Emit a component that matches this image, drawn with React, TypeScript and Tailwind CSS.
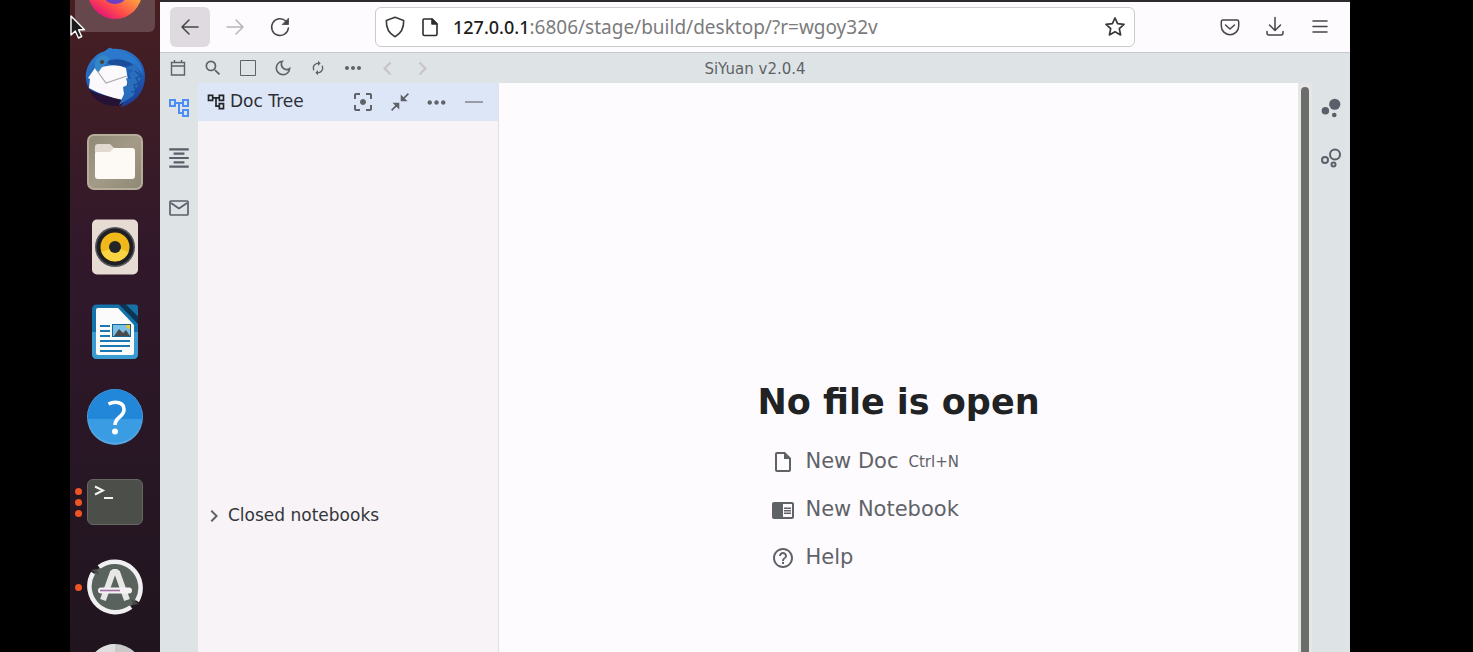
import type {ReactNode} from "react";
import {
    MdAutorenew,
    MdBubbleChart,
    MdChevronLeft,
    MdChevronRight,
    MdChromeReaderMode,
    MdFilterCenterFocus,
    MdFormatAlignCenter,
    MdHelpOutline,
    MdMoreHoriz,
    MdOutlineAccountTree,
    MdOutlineDarkMode,
    MdOutlineInsertDriveFile,
    MdSearch,
} from "react-icons/md";

type DockItem = {
    label: string;
    icon: ReactNode;
    windows?: number;
    active?: boolean;
};

const dockItems: DockItem[] = [
    {label: "Firefox", icon: <FirefoxIcon/>, active: true},
    {label: "Thunderbird", icon: <ThunderbirdIcon/>},
    {label: "Files", icon: <FilesIcon/>},
    {label: "Rhythmbox", icon: <RhythmboxIcon/>},
    {label: "LibreOffice Writer", icon: <WriterIcon/>},
    {label: "Help", icon: <HelpIcon/>},
    {label: "Terminal", icon: <TerminalIcon/>, windows: 3},
    {label: "Software Updater", icon: <UpdaterIcon/>, windows: 1},
    {label: "Disc", icon: <DiscIcon/>},
];

const topActions = [
    {label: "Daily note", icon: <CalendarIcon/>},
    {label: "Search", icon: <MdSearch size={20}/>},
    {label: "Fullscreen", icon: <SquareIcon/>},
    {label: "Dark mode", icon: <MdOutlineDarkMode size={20}/>},
    {label: "Sync", icon: <MdAutorenew size={16}/>},
    {label: "More", icon: <MdMoreHoriz size={24}/>},
];

const panelActions = [
    {label: "Focus", icon: <MdFilterCenterFocus size={24}/>},
    {label: "Collapse", icon: <CollapseIcon/>},
    {label: "More", icon: <MdMoreHoriz size={27}/>},
    {label: "Minimize", icon: <MinimizeIcon/>},
];

export default function App() {
    return (
        <div className="flex h-screen overflow-hidden bg-black pl-[70px] pr-[123px] font-['DejaVu_Sans',sans-serif]">
            <Dock/>
            <div className="flex min-w-0 flex-1 flex-col border-t-2 border-[#2e2a2d] bg-[#dee3e6]">
                <BrowserToolbar/>
                <AppTopBar/>
                <main className="flex min-h-0 flex-1">
                    <SideRail>
                        <RailButton label="Doc Tree" active><MdOutlineAccountTree size={24}/></RailButton>
                        <RailButton label="Outline"><MdFormatAlignCenter size={26}/></RailButton>
                        <RailButton label="Inbox"><MailIcon/></RailButton>
                    </SideRail>
                    <DocTreePanel/>
                    <EmptyEditor/>
                    <div className="w-3.5 shrink-0 bg-[#e6e6e6] pt-1">
                        <div className="ml-[3px] h-full w-2 rounded-t-full bg-[#6b6d6b]"/>
                    </div>
                    <SideRail>
                        <RailButton label="Graph"><MdBubbleChart size={28}/></RailButton>
                        <RailButton label="Global graph"><GlobalGraphIcon/></RailButton>
                    </SideRail>
                </main>
            </div>
            <Pointer/>
        </div>
    );
}

function Dock() {
    return (
        <nav
            aria-label="Applications"
            className="w-[90px] shrink-0 overflow-hidden bg-linear-to-b from-[#471f22] via-[#30182a] via-40% to-[#20151f]"
        >
            <ul className="-mt-12 flex flex-col items-center gap-[5px]">
                {dockItems.map((item) => (
                    <li key={item.label} className="relative">
                        <button
                            aria-label={item.label}
                            className={`flex size-20 items-center justify-center rounded-md ${item.active ? "bg-[#66484c]" : ""}`}
                        >
                            {item.icon}
                        </button>
                        {item.windows && (
                            <span className="absolute inset-y-0 left-0 flex flex-col justify-center gap-1">
                                {Array.from({length: item.windows}, (_, i) => (
                                    <span key={i} className="size-[7px] rounded-full bg-[#ee5424]"/>
                                ))}
                            </span>
                        )}
                    </li>
                ))}
            </ul>
        </nav>
    );
}

function BrowserToolbar() {
    return (
        <div className="flex h-[51px] shrink-0 items-center gap-[5px] border-b border-[#c9c7cb] bg-[#fefbff] px-2.5 text-[#454545]">
            <ToolbarButton label="Back" active>
                <path d="M20 12H4M11 5l-7 7 7 7"/>
            </ToolbarButton>
            <ToolbarButton label="Forward" faded>
                <path d="M4 12h16M13 5l7 7-7 7"/>
            </ToolbarButton>
            <ToolbarButton label="Reload">
                <path d="M20.4 13A8.4 8.4 0 1 1 18 6.200"/>
                <path d="M20.500 3.500v6h-6z" fill="currentColor" strokeWidth="0.8"/>
            </ToolbarButton>

            <div className="mx-[70px] flex h-10 min-w-0 flex-1 items-center rounded-md border border-[#cbcacc] bg-white">
                <svg viewBox="0 0 24 24" className="ml-1.5 size-[26px] shrink-0" fill="none" stroke="#3c3c3c" strokeWidth="1.5" strokeLinejoin="round">
                    <path d="M12 3l8 3c.3 7-2.600 12-8 15C6.600 18 3.700 13 4 6z"/>
                </svg>
                <svg viewBox="0 0 24 24" className="ml-2.5 size-6 shrink-0" fill="none" stroke="#2c2c2c" strokeWidth="1.6" strokeLinejoin="round">
                    <path d="M6 4h8l5 5v10q0 1.500-1.500 1.500h-11Q5 20.500 5 19V5q0-1 1-1z"/>
                    <path d="M14 4v5h5z" fill="#2c2c2c"/>
                </svg>
                <div className="ml-[11px] min-w-0 flex-1 truncate font-['Noto_Sans',sans-serif] text-[19px] text-[#7b7b7d]">
                    <span className="text-[18px] font-medium text-[#1c1c1c]">127.0.0.1</span>:6806/stage/build/desktop/?r=wgoy32v
                </div>
                <button aria-label="Bookmark this page" className="mr-1.5 flex size-[26px] items-center justify-center">
                    <svg viewBox="0 0 24 24" className="size-6" fill="none" stroke="#383838" strokeWidth="1.7" strokeLinejoin="round">
                        <path d="m12 3 2.600 5.700 6.400.7-4.700 4.200 1.300 6.300L12 16.800l-5.600 3.100 1.300-6.300L3 9.400l6.400-.7z"/>
                    </svg>
                </button>
            </div>

            <ToolbarButton label="Save to Pocket">
                <path d="M5 5h14q1.700 0 1.700 1.700V11a8.700 8.700 0 0 1-17.400 0V6.700Q3.300 5 5 5z"/>
                <path d="m7.500 10 4.500 4 4.500-4"/>
            </ToolbarButton>
            <ToolbarButton label="Downloads">
                <path d="M12 2.500V15M6.500 10l5.500 5.500 5.500-5.500M4 16.500V18q0 2 2 2h12q2 0 2-2v-1.500"/>
            </ToolbarButton>
            <ToolbarButton label="Menu">
                <path d="M5 6h14M5 11.500h14M5 17h14"/>
            </ToolbarButton>
        </div>
    );
}

type ToolbarButtonProps = {
    label: string;
    active?: boolean;
    faded?: boolean;
    children: ReactNode;
};

function ToolbarButton({label, active, faded, children}: ToolbarButtonProps) {
    return (
        <button
            aria-label={label}
            className={`flex size-10 shrink-0 items-center justify-center rounded-md ${active ? "bg-[#dedadf]" : ""} ${faded ? "text-[#b7b5b9]" : ""}`}
        >
            <svg viewBox="0 0 24 24" className="size-6" fill="none" stroke="currentColor" strokeWidth="1.5" strokeLinecap="round" strokeLinejoin="round">
                {children}
            </svg>
        </button>
    );
}

function AppTopBar() {
    return (
        <header className="flex h-[30px] shrink-0 items-center text-[#5f6368]">
            <div className="flex flex-1">
                {topActions.map((action) => (
                    <button key={action.label} aria-label={action.label} className="flex h-[30px] w-[35px] items-center justify-center">
                        {action.icon}
                    </button>
                ))}
                <button aria-label="Go back" className="flex h-[30px] w-[35px] items-center justify-center text-[#c9c4c9]">
                    <MdChevronLeft size={27}/>
                </button>
                <button aria-label="Go forward" className="flex h-[30px] w-[35px] items-center justify-center text-[#c9c4c9]">
                    <MdChevronRight size={27}/>
                </button>
            </div>
            <h1 className="pt-0.5 text-[15px]">SiYuan v2.0.4</h1>
            <div className="flex-1"/>
        </header>
    );
}

function SideRail({children}: {children: ReactNode}) {
    return <div className="flex w-[38px] shrink-0 flex-col">{children}</div>;
}

function RailButton({label, active, children}: {label: string; active?: boolean; children: ReactNode}) {
    return (
        <button
            aria-label={label}
            className={`flex h-[50px] items-center justify-center ${active ? "text-[#4d8df6]" : "text-[#5b5f69]"}`}
        >
            {children}
        </button>
    );
}

function DocTreePanel() {
    return (
        <aside className="flex w-[301px] shrink-0 flex-col border-r border-[#dee1e6] bg-[#f7f3f7]">
            <div className="flex h-[38px] shrink-0 items-center bg-[#dde6f6] pl-2 pr-1.5 text-[#5f6368]">
                <MdOutlineAccountTree size={20} className="text-[#222529]"/>
                <h2 className="ml-1 flex-1 text-[17px] text-[#2c3036]">Doc Tree</h2>
                {panelActions.map((action) => (
                    <button key={action.label} aria-label={action.label} className="flex h-[37px] w-[37px] items-center justify-center">
                        {action.icon}
                    </button>
                ))}
            </div>
            <div className="flex-1"/>
            <button className="mb-[120px] flex h-8 items-center pl-1 text-[17px] text-[#33363b]">
                <MdChevronRight size={24} className="mr-0.5 text-[#5f6368]"/>
                Closed notebooks
            </button>
        </aside>
    );
}

function EmptyEditor() {
    return (
        <section className="flex min-w-0 flex-1 flex-col items-center bg-[#fefbff] pt-[294px]">
            <div>
                <h2 className="text-[35px] font-bold leading-[50px] text-[#202224]">No file is open</h2>
                <div className="mt-[11px] flex flex-col items-start px-3.5 text-[21px] text-[#5f6368]">
                    <button className="flex h-12 items-center">
                        <MdOutlineInsertDriveFile size={24} className="mr-2.5"/>
                        New Doc
                        <kbd className="ml-2.5 font-['DejaVu_Sans',sans-serif] text-[15px]">Ctrl+N</kbd>
                    </button>
                    <button className="flex h-12 items-center">
                        <MdChromeReaderMode size={24} className="mr-2.5"/>
                        New Notebook
                    </button>
                    <button className="flex h-12 items-center">
                        <MdHelpOutline size={24} className="mr-2.5"/>
                        Help
                    </button>
                </div>
            </div>
        </section>
    );
}

function CalendarIcon() {
    return (
        <svg viewBox="0 0 16 16" className="size-4" fill="none" stroke="currentColor" strokeWidth="1.4">
            <path d="M1.500 2.500h13v12.500h-13zM1.500 6h13M4.500 0v3M11.500 0v3"/>
        </svg>
    );
}

function SquareIcon() {
    return (
        <svg viewBox="0 0 16 16" className="size-4" fill="none" stroke="currentColor">
            <path d="M.5.5h15v15H.5z"/>
        </svg>
    );
}

function CollapseIcon() {
    return (
        <svg viewBox="0 0 18 18" className="size-[18px]" fill="currentColor">
            <path d="M18 1.200 16.800 0l-4.200 4.200L9.700 1.500v6.800h6.800l-2.700-2.900zM0 16.800 1.200 18l4.200-4.200 2.900 2.700V9.700H1.500l2.700 2.900z"/>
        </svg>
    );
}

function MinimizeIcon() {
    return (
        <svg viewBox="0 0 18 18" className="size-[18px]" fill="#989da7">
            <path d="M0 8h18v2H0z"/>
        </svg>
    );
}

function MailIcon() {
    return (
        <svg viewBox="0 0 20 16" className="h-4 w-5" fill="none" stroke="currentColor" strokeWidth="1.7" strokeLinejoin="round">
            <rect x="1" y="1" width="18" height="14" rx="1"/>
            <path d="m2 3 8 5.500L18 3"/>
        </svg>
    );
}

function GlobalGraphIcon() {
    return (
        <svg viewBox="0 0 22 20" className="h-5 w-[22px]" fill="none" stroke="currentColor" strokeWidth="2">
            <circle cx="15" cy="6.500" r="5"/>
            <circle cx="5" cy="12" r="3"/>
            <circle cx="13.500" cy="16.500" r="2"/>
        </svg>
    );
}

function FirefoxIcon() {
    return (
        <svg viewBox="0 0 56 56" className="size-14">
            <defs>
                <linearGradient id="fox" x1="0.9" y1="0.1" x2="0.3" y2="1">
                    <stop offset="0" stopColor="#ffe14a"/>
                    <stop offset="0.45" stopColor="#ff9640"/>
                    <stop offset="0.75" stopColor="#ff4a4a"/>
                    <stop offset="1" stopColor="#e3137c"/>
                </linearGradient>
            </defs>
            <circle cx="28" cy="28" r="27" fill="url(#fox)"/>
            <circle cx="28" cy="27" r="13" fill="#6b3fc4"/>
        </svg>
    );
}

function ThunderbirdIcon() {
    return (
        <svg viewBox="0 0 60 60" className="size-[60px]">
            <defs>
                <linearGradient id="bird" x1="0.3" y1="0" x2="0.6" y2="1">
                    <stop offset="0" stopColor="#2f80cf"/>
                    <stop offset="0.5" stopColor="#1f5fb8"/>
                    <stop offset="1" stopColor="#1d3f98"/>
                </linearGradient>
            </defs>
            <path d="M20 4q4-4 7-3l-1 1c18-2 34 10 34 27 0 16-10 27-24 31l3-5-10 3 2-3C16 56 3 47 1 33-1 20 8 10 15 6z" fill="url(#bird)"/>
            <path d="M24 4c18-2 33 9 34 24-7-14-20-17-32-13l-9 3z" fill="#2b78cc"/>
            <path d="M20 15c12-6 26-2 33 8-8-4-14-4-22-3z" fill="#1b4c9c"/>
            <path d="M4 42q10 7 37 10l-7 7C19 60 8 53 4 42z" fill="#251235"/>
            <path d="m10 21 12-2q11-2 19 2l2 12-5 20Q18 49 4 41l1-9-2-1z" fill="#fbf9fb"/>
            <path d="m10 21 11 15 21-7" fill="none" stroke="#aaa8ae" strokeWidth="1.2"/>
            <path d="M10 19c-1-6 3-10 9-11 6 2 6 5 3 8-2 2-6 4-8 9l-3-2z" fill="#3387c9"/>
            <circle cx="17" cy="15" r="2" fill="#4b4335"/>
            <path d="m41 20 8 4-5 2 2 6-5-1 2 7-5 2 1 7-5 11 14-9 8-19-4-13z" fill="#2a6fbd"/>
            <path d="m50 24 6 5-5 2 3 5-5 2 2 6-5 1" fill="none" stroke="#174c9a" strokeWidth="1.2"/>
        </svg>
    );
}

function FilesIcon() {
    return (
        <svg viewBox="0 0 56 56" className="size-14">
            <defs>
                <linearGradient id="drawer" x1="0" y1="0" x2="1" y2="1">
                    <stop offset="0" stopColor="#8f8874"/>
                    <stop offset="0.5" stopColor="#a39b87"/>
                    <stop offset="1" stopColor="#8f8874"/>
                </linearGradient>
            </defs>
            <rect x="1" y="1" width="54" height="54" rx="6" fill="url(#drawer)" stroke="#b5ac99" strokeWidth="2"/>
            <path d="M8 20v-7q0-3 3-3h12l5 5v9H8z" fill="#e2dad0"/>
            <path d="M8 20q0-2 3-2h12l4-4h18q3 0 3 3v25q0 3-3 3H11q-3 0-3-3z" fill="#fdfaf6"/>
        </svg>
    );
}

function RhythmboxIcon() {
    return (
        <svg viewBox="0 0 56 56" className="size-14">
            <rect x="5" y="0.500" width="46" height="55" rx="5" fill="#e7dcd4"/>
            <circle cx="28" cy="28" r="20" fill="#54565b"/>
            <circle cx="28" cy="28" r="18.500" fill="#1f2025"/>
            <circle cx="28" cy="28" r="14.500" fill="#f0b818"/>
            <path d="M14.500 33a14.500 14.500 0 0 0 27 0L28 28z" fill="#fbd444"/>
            <circle cx="28" cy="28" r="6" fill="#24262a"/>
        </svg>
    );
}

function WriterIcon() {
    return (
        <svg viewBox="0 0 56 56" className="size-14">
            <path d="M10 .5h22l19 18V50q0 5-5 5H10q-5 0-5-5V5.500q0-5 5-5z" fill="#1473aa"/>
            <path d="M5 28h46v22q0 5-5 5H10q-5 0-5-5z" fill="#399bd0"/>
            <path d="M32 .5 51 20V12L40 .5z" fill="#0c3552"/>
            <path d="M39 .5h9q3 0 3 3v9z" fill="#1871a6"/>
            <path d="M11 4h20l16 17v28q0 2-2 2H11q-2 0-2-2V6q0-2 2-2z" fill="#fcfbfc"/>
            <path d="M13 22h10M13 27h10M13 32h10M13 37h30M13 42h30M13 47h22" stroke="#1b78b3" strokeWidth="2.2"/>
            <rect x="25.500" y="20.500" width="18" height="12" fill="#7cc0e6" stroke="#166594"/>
            <path d="m27 32 5-7 4 4 3-3 4 6z" fill="#494b4c"/>
            <path d="M39 21h4v4q-4 0-4-4z" fill="#efc42c"/>
        </svg>
    );
}

function HelpIcon() {
    return (
        <svg viewBox="0 0 56 56" className="size-14">
            <circle cx="28" cy="28" r="28" fill="#57a8e3"/>
            <path d="M.8 30a27.300 27.300 0 1 1 54.400 0z" fill="#2287d9"/>
            <path d="M.8 30a27.300 26 0 0 0 54.400 0z" fill="#3a9de4"/>
            <path d="M21.500 15c7-3.500 15.500-1.500 15.500 5.500 0 8-9 7-9 15.500" fill="none" stroke="#fff" strokeWidth="3.6"/>
            <circle cx="28" cy="42.500" r="3" fill="#fff"/>
        </svg>
    );
}

function TerminalIcon() {
    return (
        <svg viewBox="0 0 56 46" className="h-[46px] w-14">
            <rect x="0.500" y="0.500" width="55" height="45" rx="5.500" fill="#4c4e4a" stroke="#656762"/>
            <path d="m8 7.500 8 4-8 4" fill="none" stroke="#f3f3f3" strokeWidth="2"/>
            <path d="M17 19h9" stroke="#f3f3f3" strokeWidth="2"/>
        </svg>
    );
}

function UpdaterIcon() {
    return (
        <svg viewBox="0 0 56 56" className="size-14">
            <circle cx="28" cy="28" r="25" fill="#59625c"/>
            <path d="M12 8a26 26 0 0 1 38 34M44 48A26 26 0 0 1 6 14" fill="none" stroke="#f0eff1" strokeWidth="4.5"/>
            <path d="m4 11 8 5-2-5 5-2M52 45l-8-5 2 5-5 2" fill="#454c47"/>
            <path d="M16 41 26 13h4l10 28" fill="none" stroke="#e8e7e8" strokeWidth="6" strokeLinejoin="bevel"/>
            <path d="M14 31.500h28" stroke="#f3f1f4" strokeWidth="6" strokeLinecap="round"/>
            <path d="M13 31.500h20" stroke="#a56ca6" strokeWidth="1.6"/>
        </svg>
    );
}

function DiscIcon() {
    return (
        <svg viewBox="0 0 56 56" className="size-14">
            <circle cx="28" cy="28" r="28" fill="#c9c9c9"/>
            <path d="M28 0a28 28 0 0 0-24 14l24 14z" fill="#dedede"/>
        </svg>
    );
}

function Pointer() {
    return (
        <svg viewBox="0 0 16 24" className="absolute left-[70px] top-[15px] h-6 w-4" fill="#1b1b1b" stroke="#fff" strokeWidth="1.4" strokeLinejoin="round">
            <path d="M1 1v19l4.300-4 3.200 7 3.200-1.500-3.200-6.700h6z"/>
        </svg>
    );
}
